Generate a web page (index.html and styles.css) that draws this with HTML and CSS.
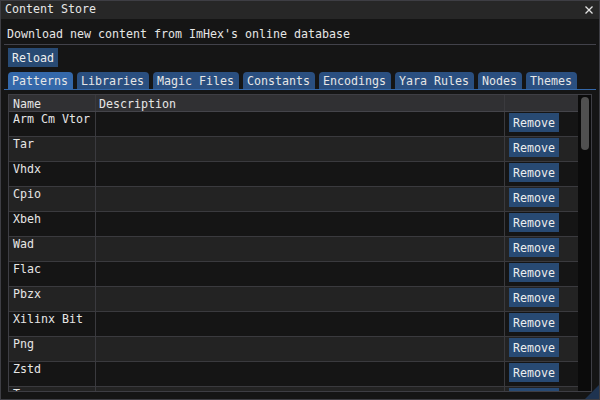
FILE: index.html
```html
<!DOCTYPE html>
<html>
<head>
<meta charset="utf-8">
<link rel="stylesheet" href="styles.css">
</head>
<body>
<div class="window">
  <div class="titlebar">
    <span class="title">Content Store</span>
    <svg class="close" width="8" height="8" viewBox="0 0 8 8"><path d="M0.5 0.5 L7.5 7.5 M7.5 0.5 L0.5 7.5" stroke="#e4e4e4" stroke-width="1.3" fill="none"/></svg>
  </div>
  <div class="content">
    <div class="label">Download new content from ImHex's online database</div>
    <div class="sep"></div>
    <div class="btnrow"><span class="btn">Reload</span></div>
    <div class="tabs">
      <span class="tab active">Patterns</span>
      <span class="tab">Libraries</span>
      <span class="tab">Magic Files</span>
      <span class="tab">Constants</span>
      <span class="tab">Encodings</span>
      <span class="tab">Yara Rules</span>
      <span class="tab">Nodes</span>
      <span class="tab">Themes</span>
    </div>
    <div class="tabline"></div>
    <div class="table">
      <div class="grid">
        <div class="row head"><div class="c name">Name</div><div class="c desc">Description</div><div class="c act"></div></div>
        <div class="row"><div class="c name">Arm Cm Vtor</div><div class="c desc"></div><div class="c act"><span class="btn">Remove</span></div></div>
        <div class="row alt"><div class="c name">Tar</div><div class="c desc"></div><div class="c act"><span class="btn">Remove</span></div></div>
        <div class="row"><div class="c name">Vhdx</div><div class="c desc"></div><div class="c act"><span class="btn">Remove</span></div></div>
        <div class="row alt"><div class="c name">Cpio</div><div class="c desc"></div><div class="c act"><span class="btn">Remove</span></div></div>
        <div class="row"><div class="c name">Xbeh</div><div class="c desc"></div><div class="c act"><span class="btn">Remove</span></div></div>
        <div class="row alt"><div class="c name">Wad</div><div class="c desc"></div><div class="c act"><span class="btn">Remove</span></div></div>
        <div class="row"><div class="c name">Flac</div><div class="c desc"></div><div class="c act"><span class="btn">Remove</span></div></div>
        <div class="row alt"><div class="c name">Pbzx</div><div class="c desc"></div><div class="c act"><span class="btn">Remove</span></div></div>
        <div class="row"><div class="c name">Xilinx Bit</div><div class="c desc"></div><div class="c act"><span class="btn">Remove</span></div></div>
        <div class="row alt"><div class="c name">Png</div><div class="c desc"></div><div class="c act"><span class="btn">Remove</span></div></div>
        <div class="row"><div class="c name">Zstd</div><div class="c desc"></div><div class="c act"><span class="btn">Remove</span></div></div>
        <div class="row alt"><div class="c name">Tga</div><div class="c desc"></div><div class="c act"><span class="btn">Remove</span></div></div>
      </div>
      <div class="scroll"><div class="grab"></div></div>
    </div>
  </div>
  <div class="grip"></div>
</div>
</body>
</html>
```

FILE: styles.css
```css
* { box-sizing: border-box; margin: 0; padding: 0; }
body {
  margin: 0;
  background: #0f0f0f;
  font-family: "DejaVu Sans Mono", "Liberation Mono", monospace;
  font-size: 11.63px;
  line-height: 13px;
  color: #e6e6e6;
}
.window {
  position: relative;
  width: 600px;
  height: 400px;
  border: 1px solid #3e3e44;
  background: #151515;
  display: flex;
  flex-direction: column;
  overflow: hidden;
}
.titlebar {
  height: 18px;
  flex: none;
  background: #272727;
  display: flex;
  justify-content: space-between;
  align-items: flex-start;
  padding: 2px 0 0 4px;
}
.close { margin: 3px 6px 0 0; display: block; }
.content {
  flex: 1;
  min-height: 0;
  display: flex;
  flex-direction: column;
  padding: 9px 7px 7px 7px;
}
.label { margin-left: -1px; }
.sep {
  height: 1px;
  background: #42424a;
  margin: 3px -4px 0 -4px;
  flex: none;
}
.btnrow { display: flex; margin-top: 3px; }
.btn {
  display: inline-block;
  height: 19px;
  padding: 4px 4px 2px 4px;
  background: #284a73;
  color: #eeeeee;
  white-space: nowrap;
}
.tabs {
  display: flex;
  gap: 4px;
  margin-top: 5px;
  height: 17px;
  flex: none;
}
.tab {
  height: 17px;
  padding: 3px 5px 1px 4px;
  background: #2a4f80;
  border-radius: 4px 4px 0 0;
  white-space: nowrap;
}
.tab.active { background: #3468aa; }
.tabline {
  height: 1px;
  background: #3468aa;
  margin: 0 -4px;
  flex: none;
}
.table {
  margin-top: 4px;
  flex: 1;
  min-height: 0;
  border: 1px solid #3e3e44;
  display: flex;
  overflow: hidden;
}
.grid {
  flex: 1;
  min-width: 0;
  overflow: hidden;
  display: flex;
  flex-direction: column;
}
.row {
  display: flex;
  height: 25px;
  flex: none;
  border-bottom: 1px solid #3a3a3e;
}
.row.alt { background: #232323; }
.row.head {
  height: 17px;
  background: #303033;
  border-bottom: 1px solid #44444a;
}
.c {
  border-right: 1px solid #3a3a3e;
  padding-top: 1px;
  white-space: nowrap;
  overflow: hidden;
}
.head .c { padding-top: 3px; }
.name { width: 87px; padding-left: 4px; }
.desc { width: 409px; padding-left: 3px; }
.act { flex: 1; border-right: none; padding-left: 4px; }
.scroll {
  width: 13px;
  flex: none;
  background: #0b0b0b;
  padding: 2px 2px 0 3px;
}
.grab {
  width: 8px;
  height: 53px;
  background: #505050;
  border-radius: 4px;
}
.grip {
  position: absolute;
  right: 0;
  bottom: 0;
  width: 14px;
  height: 14px;
  background: #1e3350;
  clip-path: polygon(100% 0, 100% 100%, 0 100%);
}
```
